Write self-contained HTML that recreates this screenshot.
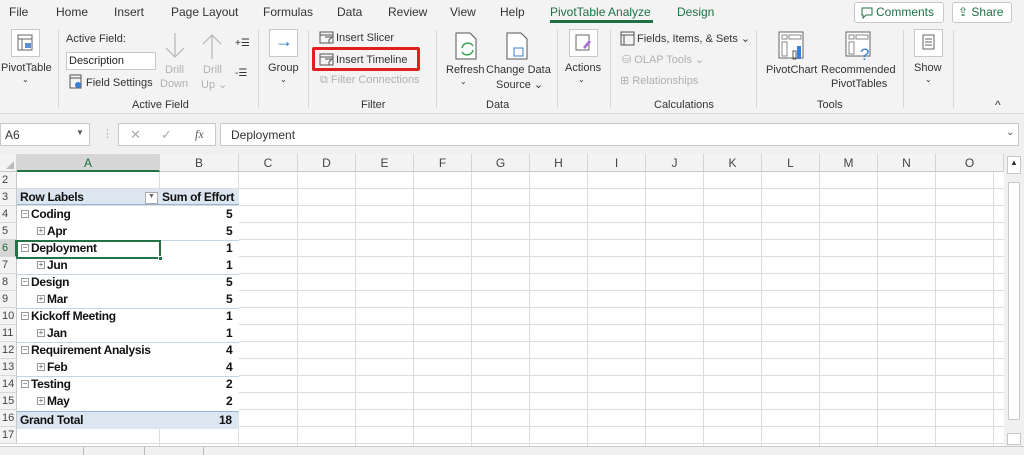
<!DOCTYPE html>
<html><head><meta charset="utf-8"><style>
*{margin:0;padding:0;box-sizing:border-box}
body{width:1024px;height:455px;overflow:hidden;background:#fff;font-family:"Liberation Sans",sans-serif;position:relative;color:#222}
.a{position:absolute;white-space:nowrap}
.t{font-size:12px;color:#333}
.r{font-size:11px;color:#333}
.g{color:#b0b0b0}
.ib{position:absolute;border:1px solid #c8c8c8;background:#fff}
.sep{position:absolute;width:1px;background:#d6d6d6}
.ch{position:absolute;top:154px;height:18px;font-size:12px;color:#444;text-align:center;line-height:18px;border-right:1px solid #d4d4d4;background:#f3f3f3;border-bottom:1px solid #c8c8c8}
.rh{position:absolute;left:0;width:17px;height:17px;font-size:11px;color:#444;line-height:17px;padding-left:2px;background:#f3f3f3;border-bottom:1px solid #d8d8d8;border-right:1px solid #c8c8c8}
.cl{position:absolute;font-size:12px;font-weight:bold;line-height:17px;height:17px;color:#111;font-family:"Liberation Sans",sans-serif;letter-spacing:-0.3px}
.bx{display:inline-block;width:8px;height:8px;border:1px solid #999;font-size:8px;line-height:6px;text-align:center;color:#555;font-weight:normal;margin-right:2px;vertical-align:middle;position:relative;top:-1px;letter-spacing:0}
</style></head><body>
<div class="a" style="left:0;top:0;width:1024px;height:113px;background:#f3f3f3"></div>
<div class="a" style="left:0;top:113px;width:1024px;height:41px;background:#f0f0f0;border-top:1px solid #dcdcdc"></div>
<span class="a t" style="left:9px;top:5px">File</span>
<span class="a t" style="left:56px;top:5px">Home</span>
<span class="a t" style="left:114px;top:5px">Insert</span>
<span class="a t" style="left:171px;top:5px">Page Layout</span>
<span class="a t" style="left:263px;top:5px">Formulas</span>
<span class="a t" style="left:337px;top:5px">Data</span>
<span class="a t" style="left:388px;top:5px">Review</span>
<span class="a t" style="left:450px;top:5px">View</span>
<span class="a t" style="left:500px;top:5px">Help</span>
<span class="a t" style="left:550px;top:5px;color:#1e7145">PivotTable Analyze</span>
<div class="a" style="left:550px;top:20px;width:103px;height:3px;background:#1e7145"></div>
<span class="a t" style="left:677px;top:5px;color:#1e7145">Design</span>
<div class="ib" style="left:854px;top:2px;width:90px;height:21px;border-radius:3px"></div>
<svg class="a" style="left:861px;top:7px" width="12" height="12"><path d="M1 1h10v7H5l-3 3V8H1z" fill="none" stroke="#1e7145"/></svg>
<span class="a t" style="left:876px;top:5px;color:#1e7145">Comments</span>
<div class="ib" style="left:952px;top:2px;width:60px;height:21px;border-radius:3px"></div>
<span class="a t" style="left:958px;top:5px;color:#1e7145">⇪ Share</span>
<div class="ib" style="left:11px;top:29px;width:29px;height:28px"></div>
<svg class="a" style="left:17px;top:34px" width="17" height="18"><rect x="1" y="1" width="14" height="15" fill="none" stroke="#666"/><line x1="1" y1="5" x2="15" y2="5" stroke="#666"/><line x1="5" y1="5" x2="5" y2="16" stroke="#666"/><rect x="8" y="9" width="6" height="5" fill="#5b8fd1"/></svg>
<span class="a r" style="left:1px;top:62px">PivotTable</span>
<span class="a r" style="left:22px;top:75px;font-size:8px">⌄</span>
<div class="sep" style="left:58px;top:30px;height:78px"></div>
<span class="a r" style="left:66px;top:33px">Active Field:</span>
<div class="ib" style="left:66px;top:52px;width:90px;height:18px"></div>
<span class="a r" style="left:69px;top:55px;color:#222">Description</span>
<svg class="a" style="left:69px;top:74px" width="14" height="16"><rect x="1" y="1" width="11" height="13" fill="none" stroke="#555"/><line x1="1" y1="4" x2="12" y2="4" stroke="#555"/><circle cx="9" cy="11" r="3" fill="#3a7fd5"/></svg>
<span class="a r" style="left:86px;top:77px">Field Settings</span>
<svg class="a" style="left:163px;top:31px" width="24" height="30"><path d="M12 2V26M3 17l9 9 9-9" fill="none" stroke="#bbb" stroke-width="1.3"/></svg>
<span class="a r g" style="left:165px;top:64px">Drill</span>
<span class="a r g" style="left:160px;top:78px">Down</span>
<svg class="a" style="left:200px;top:31px" width="24" height="30"><path d="M12 28V4M3 13l9-9 9 9" fill="none" stroke="#bbb" stroke-width="1.3"/></svg>
<span class="a r g" style="left:203px;top:64px">Drill</span>
<span class="a r g" style="left:201px;top:78px">Up ⌄</span>
<span class="a r" style="left:235px;top:38px;font-size:10px">+☰</span>
<span class="a r" style="left:235px;top:68px;font-size:10px">-☰</span>
<span class="a r" style="left:132px;top:99px">Active Field</span>
<div class="sep" style="left:258px;top:30px;height:78px"></div>
<div class="ib" style="left:269px;top:29px;width:29px;height:28px"></div>
<span class="a" style="left:275px;top:31px;font-size:18px;color:#2a7ac0">→</span>
<span class="a r" style="left:268px;top:62px">Group</span>
<span class="a r" style="left:280px;top:75px;font-size:8px">⌄</span>
<div class="sep" style="left:308px;top:30px;height:78px"></div>
<svg class="a" style="left:319px;top:31px" width="16" height="14"><rect x="1" y="1" width="13" height="11" fill="none" stroke="#555"/><line x1="1" y1="4" x2="14" y2="4" stroke="#555"/><path d="M6 6h7l-3 3v3" fill="none" stroke="#555"/></svg>
<span class="a r" style="left:336px;top:32px">Insert Slicer</span>
<svg class="a" style="left:319px;top:53px" width="16" height="14"><rect x="1" y="1" width="13" height="11" fill="none" stroke="#555"/><line x1="1" y1="4" x2="14" y2="4" stroke="#555"/><path d="M6 6h7l-3 3v3" fill="none" stroke="#555"/></svg>
<span class="a r" style="left:336px;top:54px">Insert Timeline</span>
<div class="a" style="left:312px;top:47px;width:108px;height:24px;border:3px solid #e0201f;border-radius:2px"></div>
<span class="a r g" style="left:320px;top:74px">⧉ Filter Connections</span>
<span class="a r" style="left:361px;top:99px">Filter</span>
<div class="sep" style="left:436px;top:30px;height:78px"></div>
<svg class="a" style="left:454px;top:32px" width="26" height="30"><path d="M2 1h14l6 6v20H2z" fill="#fff" stroke="#555"/><path d="M8 20a6 6 0 0 0 11-2M19 14a6 6 0 0 0-11 2" fill="none" stroke="#3aa655" stroke-width="1.5"/></svg>
<span class="a r" style="left:446px;top:64px">Refresh</span>
<span class="a r" style="left:460px;top:77px;font-size:8px">⌄</span>
<svg class="a" style="left:505px;top:32px" width="26" height="30"><path d="M2 1h14l6 6v20H2z" fill="#fff" stroke="#555"/><rect x="9" y="16" width="9" height="8" fill="none" stroke="#3a7fd5"/></svg>
<span class="a r" style="left:486px;top:64px">Change Data</span>
<span class="a r" style="left:496px;top:78px">Source ⌄</span>
<span class="a r" style="left:486px;top:99px">Data</span>
<div class="sep" style="left:557px;top:30px;height:78px"></div>
<div class="ib" style="left:569px;top:29px;width:29px;height:28px"></div>
<svg class="a" style="left:575px;top:34px" width="17" height="18"><rect x="1" y="1" width="13" height="15" fill="none" stroke="#666"/><path d="M8 13l6-7 2 2-6 7z" fill="#a86fd8"/></svg>
<span class="a r" style="left:565px;top:62px">Actions</span>
<span class="a r" style="left:578px;top:75px;font-size:8px">⌄</span>
<div class="sep" style="left:610px;top:30px;height:78px"></div>
<svg class="a" style="left:620px;top:31px" width="16" height="16"><rect x="1" y="1" width="13" height="13" fill="none" stroke="#555"/><line x1="1" y1="4" x2="14" y2="4" stroke="#555"/><line x1="4" y1="4" x2="4" y2="14" stroke="#555"/></svg>
<span class="a r" style="left:637px;top:32px">Fields, Items, &amp; Sets ⌄</span>
<span class="a r g" style="left:622px;top:53px">⛁ OLAP Tools ⌄</span>
<span class="a r g" style="left:620px;top:74px">⊞ Relationships</span>
<span class="a r" style="left:654px;top:99px">Calculations</span>
<div class="sep" style="left:756px;top:30px;height:78px"></div>
<svg class="a" style="left:778px;top:31px" width="30" height="30"><rect x="1" y="1" width="24" height="26" fill="#fff" stroke="#666"/><rect x="4" y="4" width="5" height="4" fill="none" stroke="#888"/><rect x="11" y="4" width="12" height="4" fill="none" stroke="#888"/><rect x="4" y="11" width="5" height="14" fill="none" stroke="#888"/><rect x="15" y="20" width="3" height="8" fill="none" stroke="#555"/><rect x="19" y="15" width="4" height="13" fill="#3a7fd5"/></svg>
<span class="a r" style="left:766px;top:64px">PivotChart</span>
<svg class="a" style="left:845px;top:31px" width="30" height="32"><rect x="1" y="1" width="24" height="24" fill="#fff" stroke="#666"/><rect x="4" y="4" width="5" height="4" fill="none" stroke="#888"/><rect x="11" y="4" width="12" height="4" fill="none" stroke="#888"/><rect x="4" y="11" width="5" height="12" fill="none" stroke="#888"/><text x="15" y="29" font-size="17" fill="#3a7fd5" font-family="Liberation Sans">?</text></svg>
<span class="a r" style="left:821px;top:64px">Recommended</span>
<span class="a r" style="left:831px;top:78px">PivotTables</span>
<span class="a r" style="left:817px;top:99px">Tools</span>
<div class="sep" style="left:903px;top:30px;height:78px"></div>
<div class="ib" style="left:914px;top:29px;width:29px;height:28px"></div>
<svg class="a" style="left:922px;top:34px" width="14" height="18"><rect x="1" y="1" width="11" height="14" fill="none" stroke="#666"/><line x1="3" y1="5" x2="10" y2="5" stroke="#666"/><line x1="3" y1="8" x2="10" y2="8" stroke="#666"/><line x1="3" y1="11" x2="10" y2="11" stroke="#666"/></svg>
<span class="a r" style="left:914px;top:62px">Show</span>
<span class="a r" style="left:925px;top:75px;font-size:8px">⌄</span>
<div class="sep" style="left:953px;top:30px;height:78px"></div>
<span class="a r" style="left:995px;top:98px;font-size:12px">^</span>
<div class="ib" style="left:0;top:123px;width:90px;height:23px"></div>
<span class="a t" style="left:5px;top:128px">A6</span>
<span class="a" style="left:76px;top:128px;font-size:8px;color:#555">▼</span>
<span class="a" style="left:102px;top:127px;font-size:11px;color:#aaa">⋮</span>
<div class="ib" style="left:118px;top:123px;width:98px;height:23px"></div>
<span class="a" style="left:130px;top:127px;font-size:13px;color:#aaa">✕</span>
<span class="a" style="left:161px;top:127px;font-size:13px;color:#aaa">✓</span>
<span class="a" style="left:195px;top:127px;font-size:12px;color:#555;font-style:italic;font-family:'Liberation Serif',serif">fx</span>
<div class="ib" style="left:220px;top:123px;width:799px;height:23px"></div>
<span class="a t" style="left:231px;top:128px">Deployment</span>
<span class="a" style="left:1006px;top:127px;font-size:10px;color:#555">⌄</span>
<div class="ch" style="left:0;width:17px"></div>
<svg class="a" style="left:5px;top:160px" width="10" height="10"><path d="M9 1V9H1z" fill="#bbb"/></svg>
<div class="ch" style="left:17px;width:143px;background:#d6d6d6;border-bottom:2px solid #217346;color:#1e6a3f">A</div>
<div class="ch" style="left:160px;width:79px">B</div>
<div class="ch" style="left:239px;width:59px">C</div>
<div class="ch" style="left:298px;width:58px">D</div>
<div class="ch" style="left:356px;width:58px">E</div>
<div class="ch" style="left:414px;width:58px">F</div>
<div class="ch" style="left:472px;width:58px">G</div>
<div class="ch" style="left:530px;width:58px">H</div>
<div class="ch" style="left:588px;width:58px">I</div>
<div class="ch" style="left:646px;width:58px">J</div>
<div class="ch" style="left:704px;width:58px">K</div>
<div class="ch" style="left:762px;width:58px">L</div>
<div class="ch" style="left:820px;width:58px">M</div>
<div class="ch" style="left:878px;width:58px">N</div>
<div class="ch" style="left:936px;width:68px">O</div>
<div class="a" style="left:17px;top:172px;width:987px;height:274px;
background-image:repeating-linear-gradient(to bottom,transparent 0 16px,#dcdcdc 16px 17px);"></div>
<svg class="a" style="left:0;top:172px" width="1004" height="274">
<g stroke="#dcdcdc">
<line x1="159.5" y1="0" x2="159.5" y2="17"/><line x1="159.5" y1="257" x2="159.5" y2="274"/>
<line x1="238.5" y1="0" x2="238.5" y2="274"/><line x1="297.5" y1="0" x2="297.5" y2="274"/><line x1="355.5" y1="0" x2="355.5" y2="274"/><line x1="413.5" y1="0" x2="413.5" y2="274"/><line x1="471.5" y1="0" x2="471.5" y2="274"/><line x1="529.5" y1="0" x2="529.5" y2="274"/><line x1="587.5" y1="0" x2="587.5" y2="274"/><line x1="645.5" y1="0" x2="645.5" y2="274"/><line x1="703.5" y1="0" x2="703.5" y2="274"/><line x1="761.5" y1="0" x2="761.5" y2="274"/><line x1="819.5" y1="0" x2="819.5" y2="274"/><line x1="877.5" y1="0" x2="877.5" y2="274"/><line x1="935.5" y1="0" x2="935.5" y2="274"/><line x1="993.5" y1="0" x2="993.5" y2="274"/>
</g></svg>
<div class="a" style="left:17px;top:189px;width:222px;height:16px;background:#dce6f1;border-bottom:1px solid #95b3d7"></div>
<div class="a" style="left:17px;top:206px;width:222px;height:206px;background:#fff"></div>
<div class="a" style="left:17px;top:240px;width:222px;height:1px;background:#c5d3e6"></div>
<div class="a" style="left:17px;top:274px;width:222px;height:1px;background:#c5d3e6"></div>
<div class="a" style="left:17px;top:308px;width:222px;height:1px;background:#c5d3e6"></div>
<div class="a" style="left:17px;top:342px;width:222px;height:1px;background:#c5d3e6"></div>
<div class="a" style="left:17px;top:376px;width:222px;height:1px;background:#c5d3e6"></div>
<div class="a" style="left:17px;top:411px;width:222px;height:18px;background:#dce6f1;border-top:1px solid #95b3d7"></div>
<div class="ib" style="left:145px;top:192px;width:13px;height:12px;border-color:#aaa"></div>
<span class="a" style="left:148px;top:193px;font-size:7px;color:#666">▼</span>
<div class="rh" style="top:172px">2</div><div class="rh" style="top:189px">3</div><div class="rh" style="top:206px">4</div><div class="rh" style="top:223px">5</div><div class="rh" style="top:240px;background:#d6d6d6;color:#1e6a3f;border-right:2px solid #217346">6</div><div class="rh" style="top:257px">7</div><div class="rh" style="top:274px">8</div><div class="rh" style="top:291px">9</div><div class="rh" style="top:308px">10</div><div class="rh" style="top:325px">11</div><div class="rh" style="top:342px">12</div><div class="rh" style="top:359px">13</div><div class="rh" style="top:376px">14</div><div class="rh" style="top:393px">15</div><div class="rh" style="top:410px">16</div><div class="rh" style="top:427px">17</div>
<span class="cl" style="left:20px;top:189px">Row Labels</span><span class="cl" style="left:162px;top:189px">Sum of Effort</span>
<span class="cl" style="left:21px;top:206px"><span class="bx">−</span>Coding</span><span class="cl" style="left:226px;top:206px">5</span>
<span class="cl" style="left:37px;top:223px"><span class="bx">+</span>Apr</span><span class="cl" style="left:226px;top:223px">5</span>
<span class="cl" style="left:21px;top:240px"><span class="bx">−</span>Deployment</span><span class="cl" style="left:226px;top:240px">1</span>
<span class="cl" style="left:37px;top:257px"><span class="bx">+</span>Jun</span><span class="cl" style="left:226px;top:257px">1</span>
<span class="cl" style="left:21px;top:274px"><span class="bx">−</span>Design</span><span class="cl" style="left:226px;top:274px">5</span>
<span class="cl" style="left:37px;top:291px"><span class="bx">+</span>Mar</span><span class="cl" style="left:226px;top:291px">5</span>
<span class="cl" style="left:21px;top:308px"><span class="bx">−</span>Kickoff Meeting</span><span class="cl" style="left:226px;top:308px">1</span>
<span class="cl" style="left:37px;top:325px"><span class="bx">+</span>Jan</span><span class="cl" style="left:226px;top:325px">1</span>
<span class="cl" style="left:21px;top:342px"><span class="bx">−</span>Requirement Analysis</span><span class="cl" style="left:226px;top:342px">4</span>
<span class="cl" style="left:37px;top:359px"><span class="bx">+</span>Feb</span><span class="cl" style="left:226px;top:359px">4</span>
<span class="cl" style="left:21px;top:376px"><span class="bx">−</span>Testing</span><span class="cl" style="left:226px;top:376px">2</span>
<span class="cl" style="left:37px;top:393px"><span class="bx">+</span>May</span><span class="cl" style="left:226px;top:393px">2</span>
<span class="cl" style="left:20px;top:412px">Grand Total</span><span class="cl" style="left:219px;top:412px">18</span>
<div class="a" style="left:16px;top:240px;width:145px;height:19px;border:2px solid #217346"></div>
<div class="a" style="left:158px;top:256px;width:5px;height:5px;background:#217346;border:1px solid #fff"></div>
<div class="a" style="left:1004px;top:154px;width:20px;height:292px;background:#f0f0f0"></div>
<div class="ib" style="left:1007px;top:156px;width:14px;height:18px"></div>
<span class="a" style="left:1010px;top:158px;font-size:8px;color:#333">▲</span>
<div class="ib" style="left:1008px;top:182px;width:12px;height:238px"></div>
<div class="ib" style="left:1007px;top:433px;width:14px;height:12px"></div>
<div class="a" style="left:0;top:446px;width:1024px;height:9px;background:#f0f0f0;border-top:1px solid #ccc"></div>
<div class="a" style="left:0;top:447px;width:84px;height:8px;border-right:1px solid #bbb"></div>
<div class="a" style="left:144px;top:447px;width:60px;height:8px;border-left:1px solid #bbb;border-right:1px solid #bbb"></div>
</body></html>
